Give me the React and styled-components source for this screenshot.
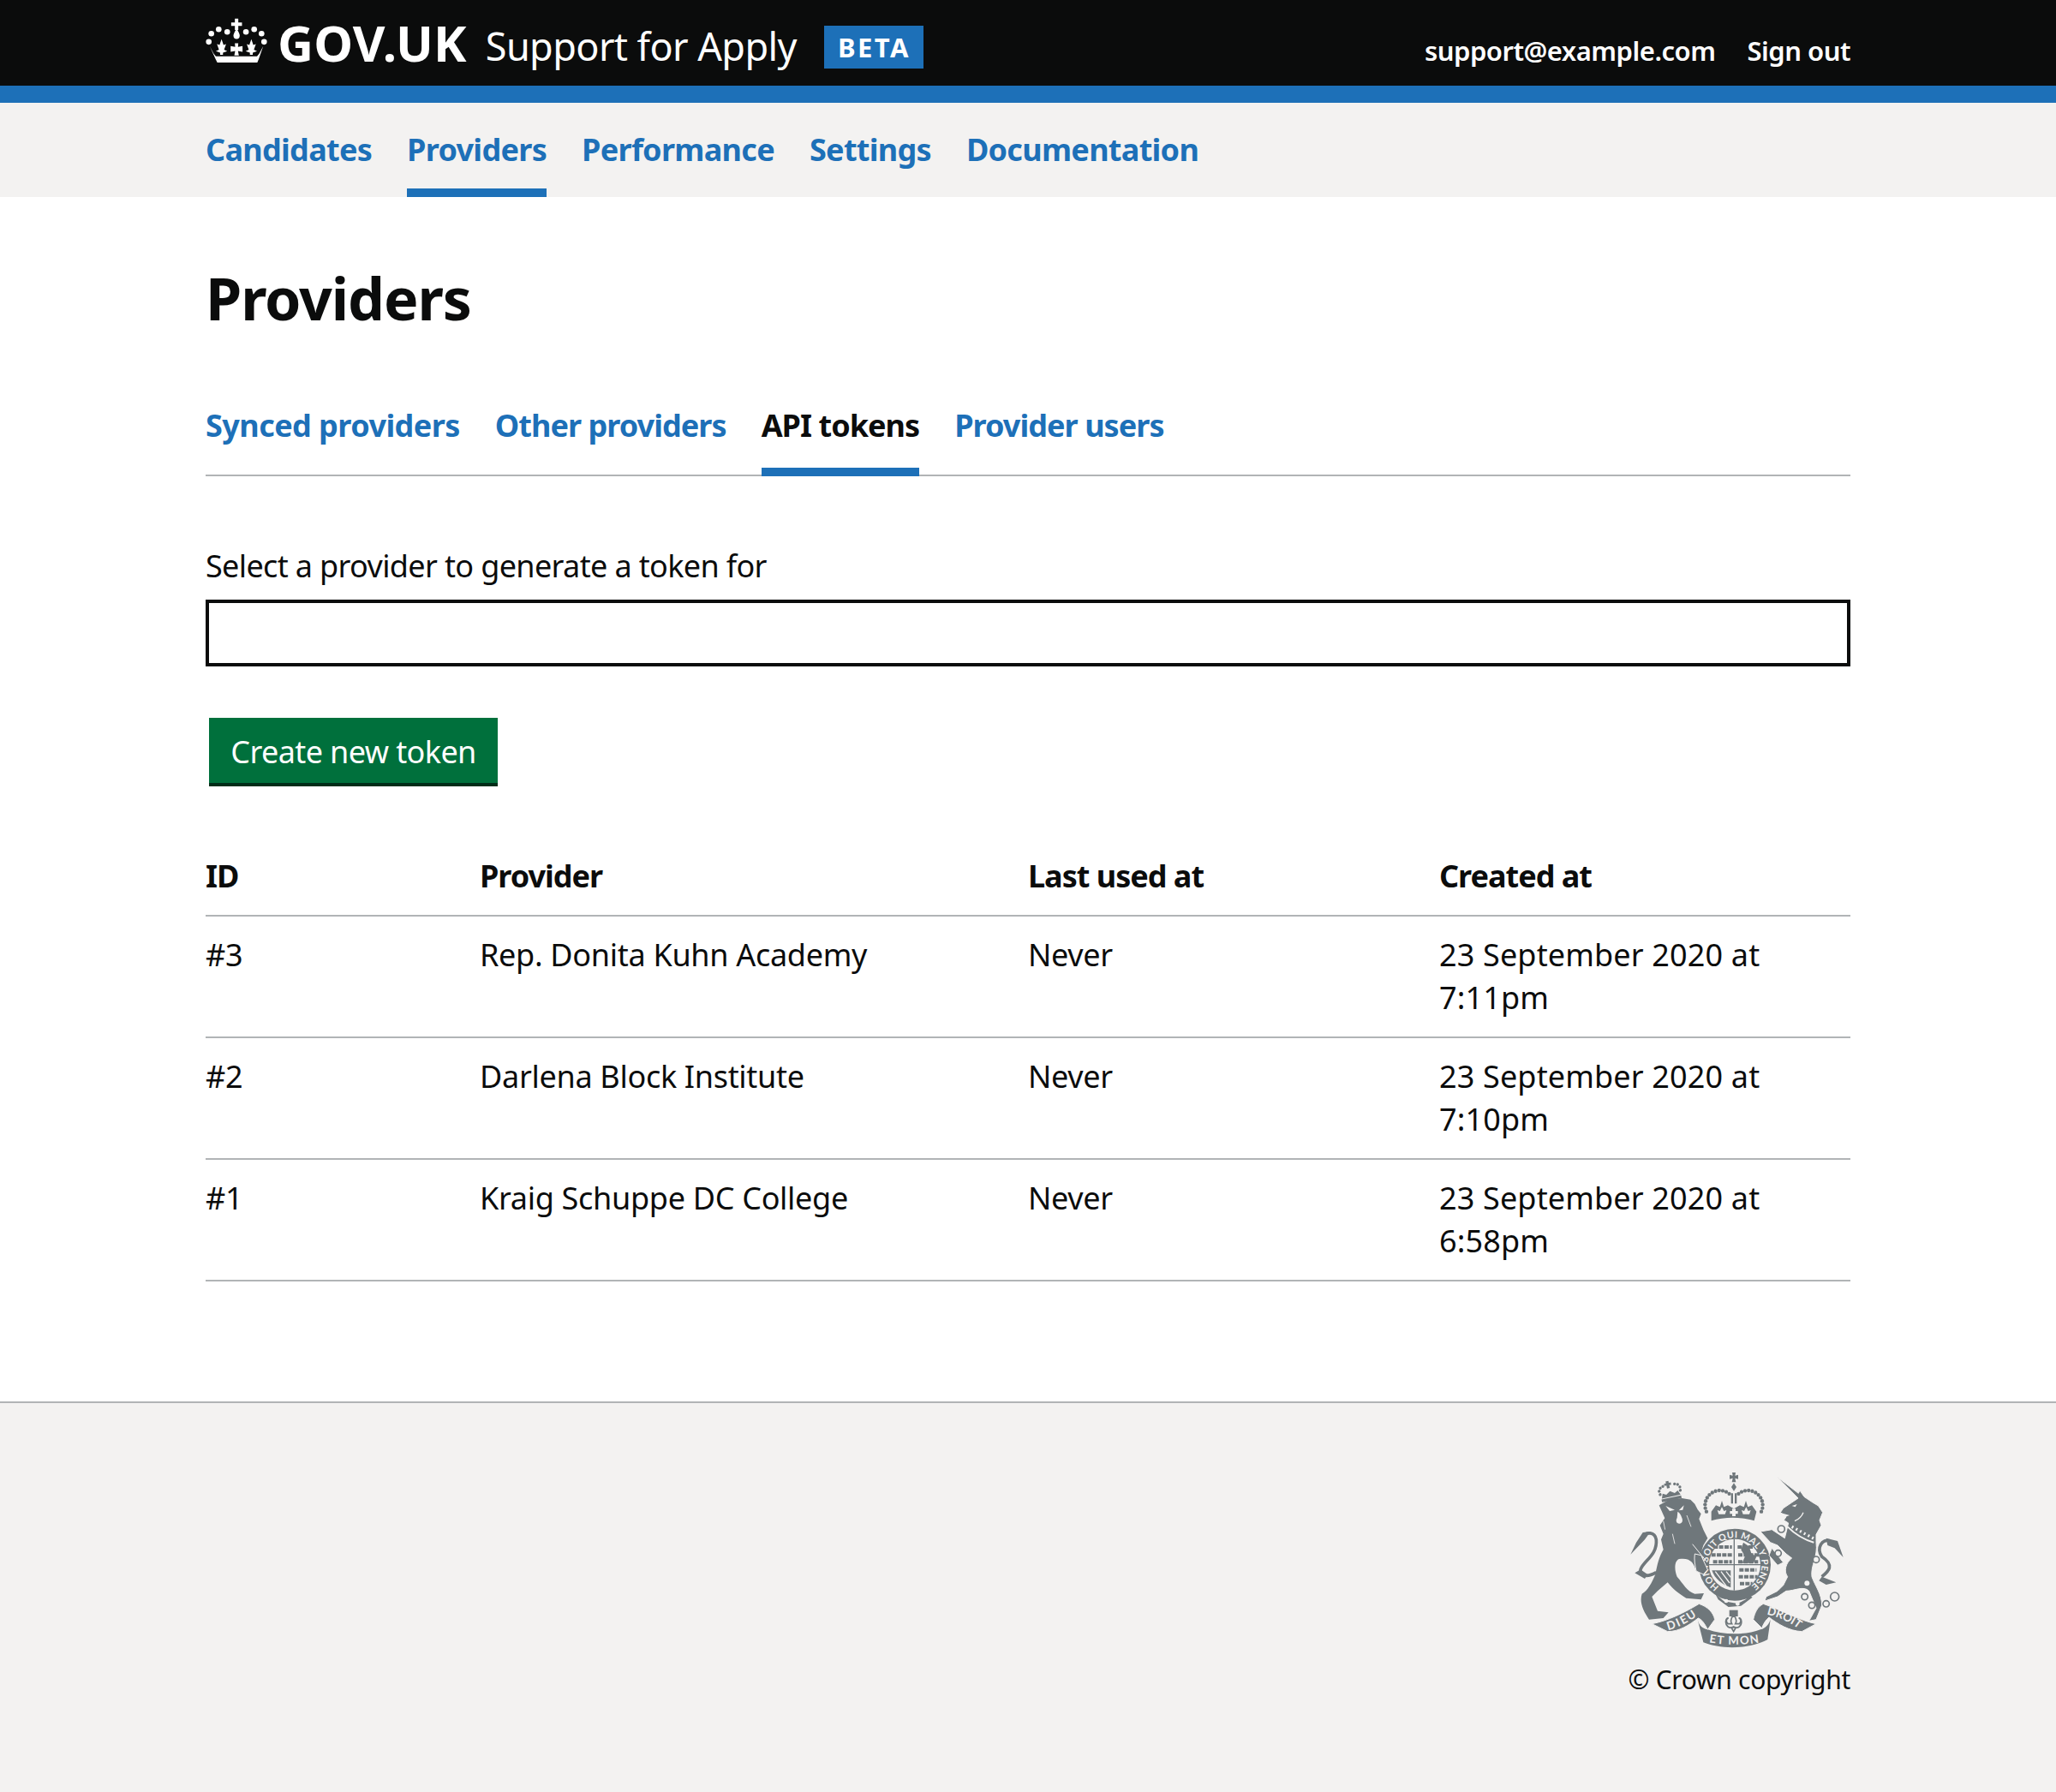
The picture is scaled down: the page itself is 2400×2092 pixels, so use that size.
import styled, { createGlobalStyle } from "styled-components";

const BG = "#f3f2f1";
const GREY = "#6f777b";

const Global = createGlobalStyle`
  html, body { margin: 0; padding: 0; background: #fff; }
  body {
    font-family: "Noto Sans", "Open Sans", Arial, sans-serif;
    color: #0b0c0c;
    font-size: 36px;
    line-height: 50px;
    letter-spacing: -0.3px;
  }
`;

const Page = styled.div`
  min-height: 2092px;
  display: flex;
  flex-direction: column;
`;

const Header = styled.header`
  background: #0b0c0c;
  border-bottom: 20px solid #1d70b8;
  height: 100px;
`;

const Container = styled.div`
  width: 1920px;
  margin: 0 auto;
`;

const HeaderRow = styled(Container)`
  height: 100px;
  display: flex;
  justify-content: space-between;
  color: #fff;
`;

const Brand = styled.div`
  display: flex;
  align-items: flex-start;
`;

const CrownBox = styled.svg`
  width: 72px;
  height: 52px;
  margin-top: 21px;
  margin-right: 12px;
`;

const GovUk = styled.span`
  font-size: 58px;
  line-height: 100px;
  font-weight: 700;
  letter-spacing: 0.2px;
`;

const Service = styled.span`
  font-size: 45px;
  line-height: 108px;
  margin-left: 22px;
  letter-spacing: -0.6px;
`;

const Beta = styled.strong`
  background: #1d70b8;
  font-size: 31px;
  line-height: 50px;
  letter-spacing: 2.5px;
  padding: 0 15px 0 16px;
  margin: 30px 0 0 32px;
`;

const UserLinks = styled.div`
  display: flex;
  gap: 37px;
  font-size: 31px;
  font-weight: 600;
  line-height: 118px;
  letter-spacing: -0.5px;
`;

const Nav = styled.nav`
  background: ${BG};
  height: 110px;
`;

const NavList = styled(Container)`
  display: flex;
  gap: 41px;
`;

const NavItem = styled.a`
  height: 110px;
  box-sizing: border-box;
  font-size: 36px;
  font-weight: 700;
  line-height: 110px;
  letter-spacing: -0.7px;
  color: #1d70b8;
  border-bottom: 10px solid ${(p) => (p.$active ? "#1d70b8" : "transparent")};
`;

const Main = styled(Container)`
  flex: 1;
  padding-top: 68px;
`;

const Title = styled.h1`
  margin: 0;
  font-size: 68px;
  line-height: 100px;
  font-weight: 700;
  letter-spacing: -1.1px;
`;

const Tabs = styled.div`
  display: flex;
  gap: 41px;
  margin-top: 66px;
  border-bottom: 2px solid #b1b4b6;
`;

const Tab = styled.a`
  height: 92px;
  font-weight: 700;
  font-size: 36px;
  line-height: 66px;
  letter-spacing: ${(p) => p.$spacing || "-0.95px"};
  box-sizing: border-box;
  color: ${(p) => (p.$active ? "#0b0c0c" : "#1d70b8")};
  border-bottom: 10px solid ${(p) => (p.$active ? "#1d70b8" : "transparent")};
  margin-bottom: -2px;
`;

const Label = styled.label`
  display: block;
  margin-top: 80px;
  letter-spacing: -0.64px;
`;

const Input = styled.div`
  height: 78px;
  box-sizing: border-box;
  border: 4px solid #0b0c0c;
  margin-top: 14px;
`;

const Button = styled.button`
  display: block;
  margin: 60px 0 0 4px;
  width: 337px;
  height: 80px;
  padding: 0;
  border: 0;
  background: #00703c;
  box-shadow: inset 0 -4px 0 #002d18;
  color: #fff;
  font: inherit;
  letter-spacing: -0.6px;
`;

const Table = styled.table`
  width: 100%;
  margin-top: 60px;
  border-collapse: collapse;
  table-layout: fixed;
`;

const Th = styled.th`
  text-align: left;
  font-weight: 700;
  letter-spacing: -1px;
  padding: 20px 0;
  border-bottom: 2px solid #b1b4b6;
  width: ${(p) => p.$w}px;
`;

const Td = styled.td`
  vertical-align: top;
  padding: 20px 40px 20px 0;
  border-bottom: 2px solid #b1b4b6;
  letter-spacing: ${(p) => (p.$date ? "0.15px" : "inherit")};
`;

const Footer = styled.footer`
  background: ${BG};
  border-top: 2px solid #b1b4b6;
  height: 456px;
  box-sizing: border-box;
`;

const FooterRow = styled(Container)`
  display: flex;
  flex-direction: column;
  align-items: flex-end;
  padding-top: 80px;
`;

const Copy = styled.div`
  font-size: 30px;
  line-height: 40px;
  margin-top: 16px;
`;

const Crest = styled.svg`
  width: 252px;
  height: 207px;
  margin-right: 7px;
`;

function CrownLogo() {
  return (
    <CrownBox viewBox="45 33 215 157" fill="#fff">
      <path d="M147 35h12v14h13v12h-13v14h-12V61h-13V49h13z" />
      <path d="M153 70c8 14 11 20 11 26a11 11 0 0 1-22 0c0-6 3-12 11-26z" />
      <circle cx="64" cy="88" r="10" />
      <circle cx="90" cy="73" r="10" />
      <circle cx="120" cy="82" r="10" />
      <circle cx="186" cy="82" r="10" />
      <circle cx="215" cy="73" r="10" />
      <circle cx="241" cy="88" r="10" />
      <circle cx="55" cy="117" r="10" />
      <circle cx="250" cy="117" r="10" />
      <path d="M100 108l7 20 9-3-7 20 11 5-15 5v8h-10v-8l-15-5 11-5-7-20 9 3z" />
      <path d="M205 108l7 20 9-3-7 20 11 5-15 5v8h-10v-8l-15-5 11-5-7-20 9 3z" />
      <path d="M147 122h12l-1 13 16-3v20l-16-3 3 16h-16l3-16-16 3v-20l16 3z" />
      <path d="M58 132l14 26 8 10h145l8-10 14-26-16 46-5 12H85l-6-12z" />
    </CrownBox>
  );
}

// pearls of the two arches of the big crown
const archPearls = Array.from({ length: 12 }, (_, i) => {
  const a = ((205 - i * 14) * Math.PI) / 180;
  return [52 * Math.cos(a), -52 * Math.sin(a)];
});

function Fleur({ x, y }) {
  return <path d={`M${x} ${y}l7 14 9-3-5 14h-22l-5-14 9 3z`} fill={BG} />;
}

function CoatOfArms() {
  return (
    <Crest viewBox="68 52 756 621" fill={GREY}>
      <defs>
        <path id="garter" d="M386 455A94 94 0 1 1 494 455" />
        <path id="dieu" d="M207 607c40-10 75-30 108-55" />
        <path id="etmon" d="M350 650c60 10 120 10 178 0" />
        <path id="droit" d="M552 552c40 8 85 28 116 55" />
      </defs>

      {/* lion */}
      <path d="M175 170l35-20 45-5 30 5 15 15 10 20 12 15-7 18 15 37 15 30-15 25c-5 15-8 25-8 35l23 50-15 17-25-12c-8-28-20-48-60-42-17 7-17 37-7 62 22 25 34 50 62 60l32-2-10 22-52-5c-25-15-45-30-65-55l-35 30-20 20 20 50 38 5-18 20-50 5c-20-30-35-60-25-90 20-10 35-40 47-68 6-32 13-62 28-87l-8-35 8-20-12-30 17-25z" />
      <path d="M165 405c-35 20-60 10-55-10 10-30 60-50 55-105-5-28-35-28-47-10" fill="none" stroke={GREY} strokeWidth="11" />
      <path d="M118 265l27-3-20 28-50 52 20-42zM110 395l-20 12 35 20 10-15z" />
      <path d="M198 172l32 14-18 4zM262 170l-18 18 14-2zM240 192c8 5 12 12 14 20 6 12 2 22-8 22-10 0-14-10-8-20z" fill={BG} />
      <path d="M190 225l6 30M222 270l8 35M272 205l15 40" fill="none" stroke={BG} strokeWidth="2.5" />

      {/* lion's crown */}
      <g transform="rotate(-12 213 120)">
        <path d="M205 84h10v7h7v8h-7v10h-10V99h-7v-8h7z" />
        <path d="M180 140l6-16 12 6 15-10 15 10 12-6 7 16z" />
        <path d="M178 143h70v10h-70z" />
        {[[177, 125], [176, 113], [182, 103], [192, 99], [234, 99], [244, 103], [250, 113], [249, 125]].map(([x, y]) => (
          <circle key={`c${x}-${y}`} cx={x} cy={y} r="5" />
        ))}
      </g>

      {/* royal crown */}
      <path d="M431 55h12l-2 11 11-3v15l-11-3 3 14h-14l3-14-11 3V63l11 3z" />
      <path d="M437 92l9 14-9 14-9-14z" />
      <path d="M427 128h7v36h-7zM440 128h7v36h-7z" />
      {archPearls.map(([dx, dy]) => (
        <g key={dx}>
          <circle cx={388 + dx} cy={170 + dy} r="6.5" />
          <circle cx={486 - dx} cy={170 + dy} r="6.5" />
        </g>
      ))}
      <path d="M358 192l16-22 14 6 7-22 7 22 14-6 21 12 21-12 14 6 7-22 7 22 14-6 16 22-8 32c-45-14-105-14-150 0z" />
      <Fleur x={395} y={176} />
      <Fleur x={480} y={176} />
      <path d="M431 182h12v8h8v10h-8v8h-12v-8h-8v-10h8z" fill={BG} />

      {/* garter and shield */}
      <circle cx="440" cy="378" r="126" />
      <circle cx="440" cy="378" r="90" fill={BG} />
      <g fill="none" stroke={GREY}>
        <path d="M438 288v180M350 378h180" strokeWidth="4" />
        <path d="M366 316h64M358 344h72M364 368h66M450 316l56 0M452 344h72M452 368h70" strokeWidth="12" strokeDasharray="15 4" />
        <path d="M456 396h60M454 420h66M458 444h44" strokeWidth="12" strokeDasharray="15 4" />
      </g>
      <path d="M470 300l20 14 8 24 18 12-10 22h-40l10-24-14-22z" />
      <path d="M360 398h66v60c-30-10-56-30-66-60z" />
      <path d="M372 402l38 50M392 402l30 40M410 402l16 20" fill="none" stroke={BG} strokeWidth="4" />
      <g fill={BG} fontFamily="Lato, Arial, sans-serif" fontSize="32" fontWeight="700">
        <text>
          <textPath href="#garter" textLength="470" lengthAdjust="spacing">HONI SOIT QUI MAL Y PENSE</textPath>
        </text>
      </g>
      <path d="M372 480l30 26 48 8 28-14 14-14 10 6-40 30-44 4-36-26z" />
      <circle cx="410" cy="505" r="7" fill={BG} />
      <circle cx="450" cy="515" r="7" fill={BG} />

      {/* lion's paw, over the garter */}
      <path d="M300 340l22 5 23 50-15 17-25-12c-4-20-8-40-5-60z" stroke={BG} strokeWidth="3" />
      <path d="M292 306l52 64" stroke={BG} strokeWidth="3" fill="none" />

      {/* unicorn */}
      <path
        d="M588 70l75 58 5-10 15 22 30 20 20 12 15 23-11 27 6 18-18 32v28c7 50-20 80-15 120 10 30 35 60 35 100l-20 50-25 5 25-45-25-60c-20-20-50 0-80 0l-30 20-45 15 5-15 40-20 20-20 15-30c-15-20-5-50 15-65l-20-15-30-30-25-10-35-38 40-7 45 30 13-53-16-10 8-12-20-15 10-15 30-20 22-15z"
        stroke={BG}
        strokeWidth="3"
      />
      <path d="M570 320l40 50-20 10-30-35z" stroke={BG} strokeWidth="3" />
      <path d="M600 196l32 9-18 7zM640 172l18-6-6 10z" fill={BG} />
      <path d="M680 195q-8 20-30 30" fill="none" stroke={BG} strokeWidth="4" />
      <path d="M625 245q40 40 92 55" fill="none" stroke={BG} strokeWidth="6" />
      <path d="M640 245l78 42" fill="none" stroke={BG} strokeWidth="10" strokeDasharray="6 10" />
      <path d="M745 420c25-20 45-40 0-70-20-30 0-65 30-55" fill="none" stroke={GREY} strokeWidth="11" />
      <path d="M760 285l40 10 20 57-30-32-25-10zM745 420l50 20-35 8-25-14z" />
      <circle cx="720" cy="408" r="9" fill={BG} />
      <circle cx="693" cy="443" r="9" fill={BG} />
      <g fill={BG} stroke={GREY} strokeWidth="5">
        <circle cx="685" cy="490" r="11" />
        <circle cx="710" cy="520" r="11" />
        <circle cx="760" cy="515" r="11" />
        <circle cx="790" cy="490" r="15" />
        <circle cx="603" cy="253" r="12" />
        <circle cx="725" cy="360" r="11" />
        <circle cx="592" cy="338" r="11" />
      </g>

      {/* motto ribbon */}
      <path d="M310 570c5 20 15 30 35 35 55 20 135 20 185 0 20-5 30-20 35-35l-10 70c-65 35-165 35-225 10z" />
      <path d="M150 585c55-10 115-40 165-70 30 10 50 30 55 55l-25 35c-10-20-20-35-33-40-32 25-67 47-107 47z" stroke={BG} strokeWidth="3" />
      <path d="M725 585c-55-10-125-50-185-70-20 10-30 30-35 55l30 30c5-15 15-30 25-38 30 23 70 48 115 50z" stroke={BG} strokeWidth="3" />
      <g fill={BG} fontFamily="Lato, Arial, sans-serif" fontSize="40" fontWeight="700">
        <text>
          <textPath href="#dieu" textLength="112" lengthAdjust="spacing">DIEU</textPath>
        </text>
        <text>
          <textPath href="#etmon" textLength="176" lengthAdjust="spacing">ET MON</textPath>
        </text>
        <text>
          <textPath href="#droit" textLength="122" lengthAdjust="spacing">DROIT</textPath>
        </text>
      </g>

      {/* fleur under the garter */}
      <path d="M421 537h30v22h-30z" />
      <path d="M436 555c10 10 12 20 6 30h14c8-8 6-18-2-20 10-2 14 20 2 30-6 5-14 4-20 0-6 4-14 5-20 0-12-10-8-32 2-30-8 2-10 12-2 20h14c-6-10-4-20 6-30zM428 598h16l-8 14z" fill="none" stroke={GREY} strokeWidth="5" />
    </Crest>
  );
}

const TOKENS = [
  { id: "#3", provider: "Rep. Donita Kuhn Academy", created: "23 September 2020 at 7:11pm" },
  { id: "#2", provider: "Darlena Block Institute", created: "23 September 2020 at 7:10pm" },
  { id: "#1", provider: "Kraig Schuppe DC College", created: "23 September 2020 at 6:58pm" },
];

export default function App() {
  return (
    <Page>
      <Global />
      <Header>
        <HeaderRow>
          <Brand>
            <CrownLogo />
            <GovUk>GOV.UK</GovUk>
            <Service>Support for Apply</Service>
            <Beta>BETA</Beta>
          </Brand>
          <UserLinks>
            <span>support@example.com</span>
            <span>Sign out</span>
          </UserLinks>
        </HeaderRow>
      </Header>
      <Nav>
        <NavList>
          <NavItem>Candidates</NavItem>
          <NavItem $active>Providers</NavItem>
          <NavItem>Performance</NavItem>
          <NavItem>Settings</NavItem>
          <NavItem>Documentation</NavItem>
        </NavList>
      </Nav>
      <Main>
        <Title>Providers</Title>
        <Tabs>
          <Tab $spacing="-0.55px">Synced providers</Tab>
          <Tab>Other providers</Tab>
          <Tab $active>API tokens</Tab>
          <Tab>Provider users</Tab>
        </Tabs>
        <Label>Select a provider to generate a token for</Label>
        <Input />
        <Button>Create new token</Button>
        <Table>
          <thead>
            <tr>
              <Th $w={320}>ID</Th>
              <Th $w={640}>Provider</Th>
              <Th $w={480}>Last used at</Th>
              <Th $w={480}>Created at</Th>
            </tr>
          </thead>
          <tbody>
            {TOKENS.map((t) => (
              <tr key={t.id}>
                <Td>{t.id}</Td>
                <Td>{t.provider}</Td>
                <Td>Never</Td>
                <Td $date>{t.created}</Td>
              </tr>
            ))}
          </tbody>
        </Table>
      </Main>
      <Footer>
        <FooterRow>
          <CoatOfArms />
          <Copy>© Crown copyright</Copy>
        </FooterRow>
      </Footer>
    </Page>
  );
}
